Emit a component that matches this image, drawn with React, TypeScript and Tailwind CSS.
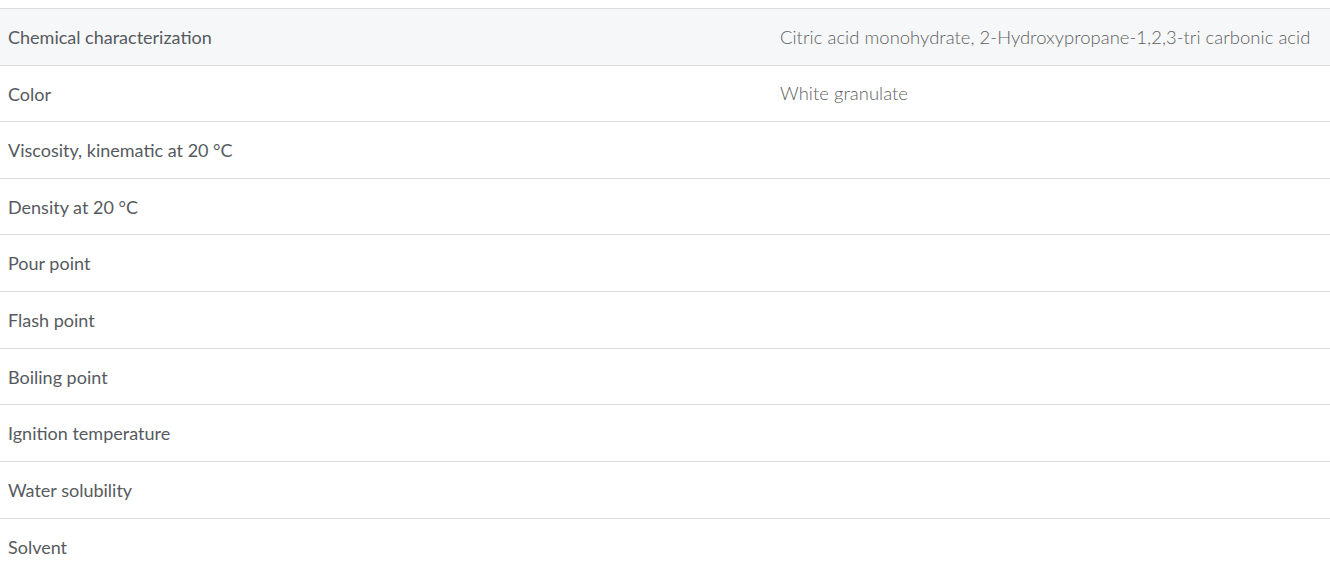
import React from "react";

const rows: { label: string; value: string; h: string; bg?: boolean }[] = [
  { label: "Chemical characterization", value: "Citric acid monohydrate, 2-Hydroxypropane-1,2,3-tri carbonic acid", h: "h-[57px]", bg: true },
  { label: "Color", value: "White granulate", h: "h-[56px]" },
  { label: "Viscosity, kinematic at 20 °C", value: "", h: "h-[57px]" },
  { label: "Density at 20 °C", value: "", h: "h-[56px]" },
  { label: "Pour point", value: "", h: "h-[57px]" },
  { label: "Flash point", value: "", h: "h-[57px]" },
  { label: "Boiling point", value: "", h: "h-[56px]" },
  { label: "Ignition temperature", value: "", h: "h-[57px]" },
  { label: "Water solubility", value: "", h: "h-[57px]" },
  { label: "Solvent", value: "", h: "h-[56px]" },
];

export default function App() {
  return (
    <div className="w-[1330px] h-[574px] overflow-hidden bg-white pt-2 font-['Lato',sans-serif]">
      {rows.map((r, i) => (
        <div
          key={i}
          className={`${r.h} flex items-center border-t border-[#dcdcdc] ${r.bg ? "bg-[#f6f7f9]" : "bg-white"}`}
        >
          <div className="w-[780px] pl-2 text-[18px] leading-none text-[#565a60]">{r.label}</div>
          <div className="flex-1 text-[18.4px] leading-none font-light tracking-[0.05px] text-[#5e5e5e]">{r.value}</div>
        </div>
      ))}
    </div>
  );
}
